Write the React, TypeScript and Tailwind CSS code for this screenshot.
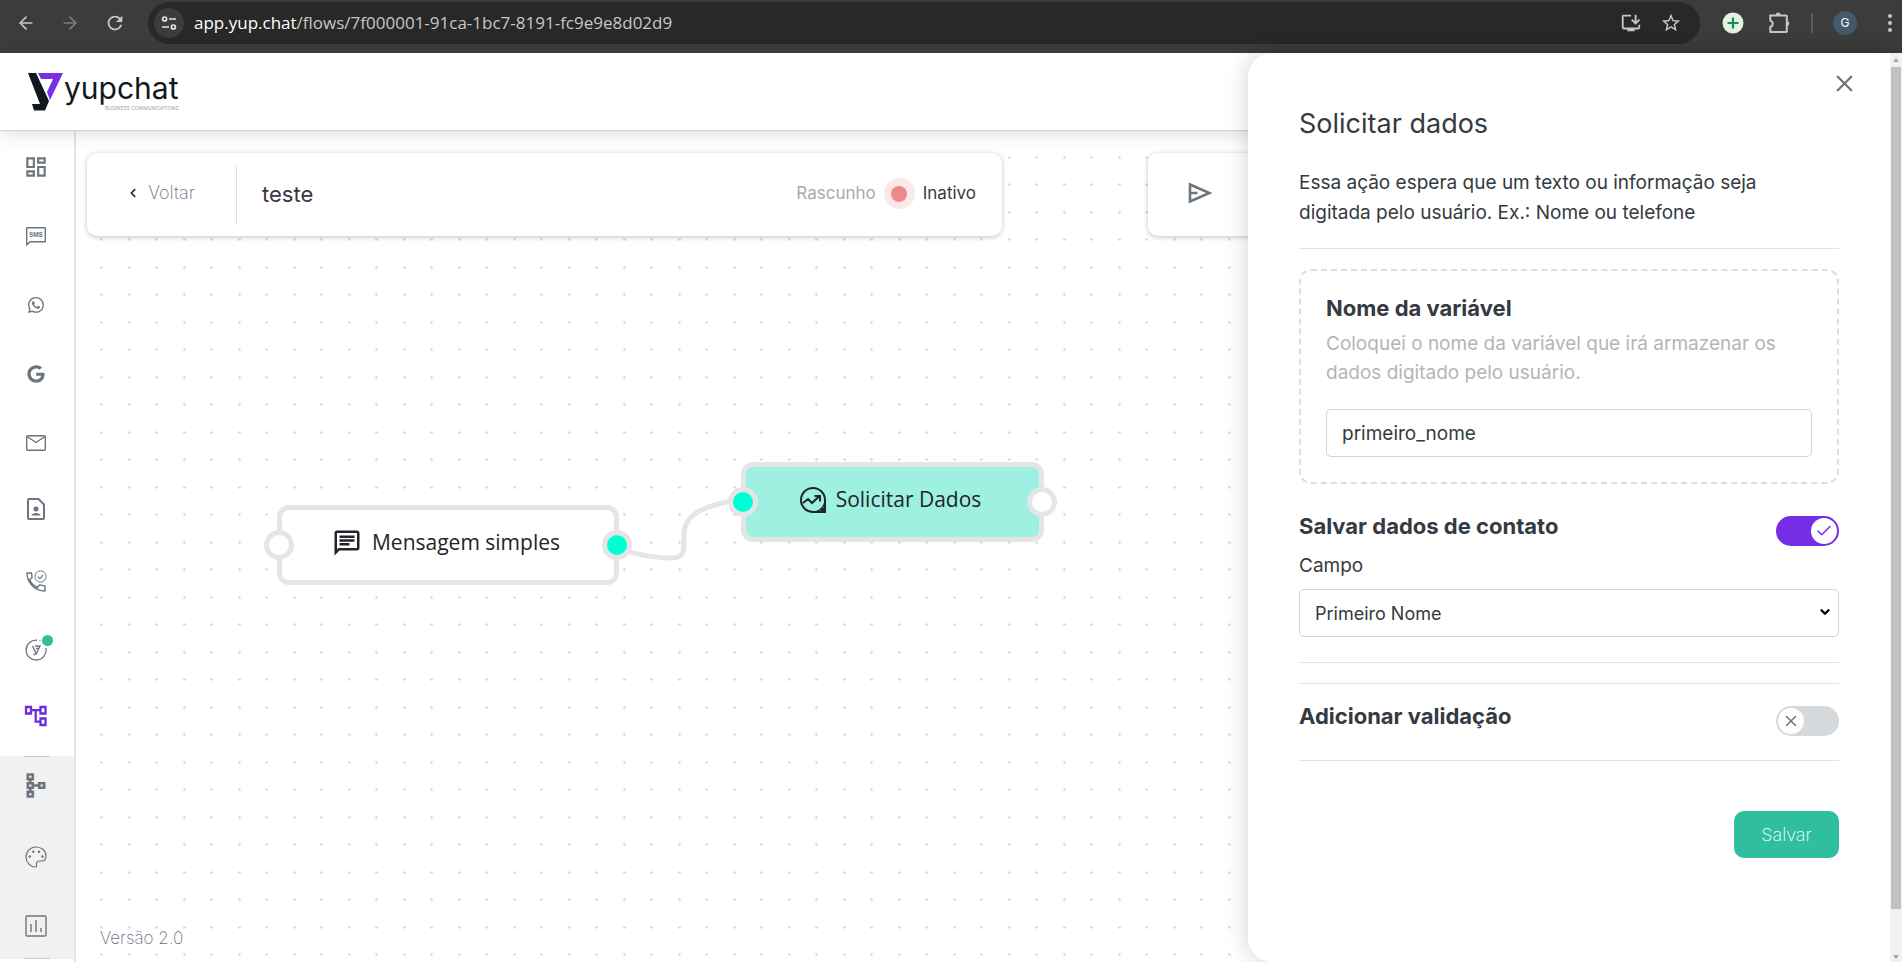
import React, { useState } from 'react';
import { ArrowLeft, ArrowRight, Check, ChevronDown, X } from 'lucide-react';
import {
  MdOutlineDashboard,
  MdOutlineChat,
  MdRefresh,
  MdStarBorder,
  MdInstallDesktop
} from 'react-icons/md';
import { FaGoogle, FaChevronLeft } from 'react-icons/fa';
import { BsWhatsapp } from 'react-icons/bs';

const PlusBadge = () => (
  <svg viewBox="0 0 22 22" className="w-[22px] h-[22px]">
    <circle cx="11" cy="11" r="10.5" fill="#e3f3e0" />
    <path d="M11 5.500v11M5.500 11h11" stroke="#0b8f5a" strokeWidth="2.200" />
  </svg>
);

const PuzzleIcon = () => (
  <svg viewBox="0 0 22 22" className="w-[22px] h-[22px]">
    <path
      d="M2 3.500h16a.8.8 0 0 1 .8.8v14.900a.8.8 0 0 1-.8.800H2.300v-5.200a3.200 3.200 0 0 0 0-6.200V3.500z"
      fill="none"
      stroke="currentColor"
      strokeWidth="2"
      strokeLinejoin="round"
    />
    <path d="M7.800 3a2.400 2.400 0 0 1 4.800 0zM19 9.200a2.400 2.400 0 0 1 0 4.800z" fill="currentColor" />
  </svg>
);

const SiteInfoIcon = () => (
  <svg viewBox="0 0 16 16" className="w-4 h-4" fill="none" stroke="#e3e3e3" strokeWidth="1.700">
    <circle cx="3.600" cy="4" r="2" />
    <path d="M8 4h7M1 12h7" />
    <circle cx="12.400" cy="12" r="2" />
  </svg>
);

const Logo = () => (
  <div className="flex items-start">
    <svg viewBox="0 0 36 38" className="w-9 h-[38px]">
      <path d="M0 0h8l13 28-4 9.500H6L4 31h8z" fill="#101820" />
      <path d="M10 0h25L22 27l-3-8 6-13H13z" fill="#7a2ee6" />
    </svg>
    <div className="flex flex-col items-end gap-0.5">
      <span className="text-[30px] leading-[30px] text-[#101820]">yupchat</span>
      <span className="whitespace-nowrap text-[5px] leading-[6px] text-gray-400">BUSINESS COMMUNICATIONS</span>
    </div>
  </div>
);

const SmsIcon = () => (
  <svg viewBox="0 0 22 22" className="w-[22px] h-[22px]">
    <path d="M1.700 20V2.700h18.600v14H5z" fill="none" stroke="currentColor" strokeWidth="1.400" strokeLinejoin="round" />
    <text x="11" y="12" textAnchor="middle" fontSize="6" fontWeight="700" fill="currentColor">SMS</text>
  </svg>
);

const MailIcon = () => (
  <svg viewBox="0 0 22 22" className="w-[22px] h-[22px]" fill="none" stroke="currentColor" strokeWidth="1.400">
    <rect x="1.700" y="3.700" width="18.600" height="14.600" rx="1" />
    <path d="M2 4.500l9 6 9-6" />
  </svg>
);

const ContactFileIcon = () => (
  <svg viewBox="0 0 18 22" className="mb-1.5 shrink-0 w-[18px] h-[22px]">
    <path d="M2 1h9.500L17 6.500V20a1 1 0 0 1-1 1H2a1 1 0 0 1-1-1V2a1 1 0 0 1 1-1z" fill="none" stroke="currentColor" strokeWidth="2" />
    <circle cx="9" cy="11" r="2.500" fill="currentColor" />
    <path d="M4.500 17.500c0-3.500 9-3.500 9 0z" fill="currentColor" />
  </svg>
);

const PhoneCheckIcon = () => (
  <svg viewBox="0 0 22 22" className="w-[22px] h-[22px]" fill="none" stroke="currentColor">
    <path strokeWidth="1.400" strokeLinejoin="round" d="M2 3h4.500l.6 4.500-2.500 2.300c1.700 3.500 4.200 6 7.700 7.700l2.200-2.600 5.500 1V21C10 21 2 13 2 3z" />
    <circle cx="15.500" cy="6.500" r="5.600" strokeWidth="1" />
    <path d="M12.800 6.700l2 1.900 3.500-3.800" strokeWidth="1.100" />
  </svg>
);

const YupCircleIcon = () => (
  <svg viewBox="0 0 22 22" className="w-[22px] h-[22px]" fill="none" stroke="currentColor">
    <path d="M12 1.100A10 10 0 1 0 20.900 9" strokeWidth="1.300" />
    <path d="M7.500 7l3.500 7-1 1.500H8.500M10 7h5l-4 8.500M11 9.500h2.500" strokeWidth="1.300" />
    <path d="M14.500 1.500h1" strokeWidth="1.300" />
  </svg>
);

const FlowIcon = () => (
  <svg viewBox="0 0 24 22" className="mb-1.5 shrink-0 w-6 h-[22px]" fill="none" stroke="currentColor" strokeWidth="2.300">
    <path d="M2 2h5v6.500H2zM16.500 2h5v6.500h-5zM16.500 13.500h5V20h-5zM7 5.200h9.500M11.700 5.200v11.500h4.800" />
  </svg>
);

const TreeIcon = () => (
  <svg viewBox="0 0 20 25" className="mb-1.5 shrink-0 w-5 h-[25px]" fill="none" stroke="currentColor" strokeWidth="2.600">
    <path d="M1.800 1.500h5v4.600h-5zM1.800 10.200h5v4.600h-5zM1.800 18.900h5v4.600h-5zM13.200 10.200h5v4.600h-5zM4.300 6.200v4M4.300 14.800v4M6.800 12.500h6.400" />
  </svg>
);

const PaletteIcon = () => (
  <svg viewBox="0 0 22 22" className="w-[22px] h-[22px]" fill="none" stroke="currentColor" strokeWidth="1.200">
    <path d="M11 1C5.500 1 1 5.500 1 11s4.500 10 9.500 10c1.500 0 1.300-1 1-2-.6-2.500.8-4 3.500-4h2c2.500 0 4-1.500 4-5 0-5.500-4.500-9-10-9z" />
    <g fill="currentColor" stroke="none">
      <circle cx="4.800" cy="10.500" r="1.200" />
      <circle cx="8.200" cy="5.700" r="1.200" />
      <circle cx="14" cy="5.700" r="1.200" />
      <circle cx="17.500" cy="10.500" r="1.200" />
    </g>
  </svg>
);

const ReportIcon = () => (
  <svg viewBox="0 0 22 22" className="w-[22px] h-[22px]" fill="none" stroke="currentColor" strokeWidth="1.400">
    <rect x="1" y="1" width="20" height="20" rx="1" />
    <path d="M6 9v8M11 5v12M16 13v4" />
  </svg>
);

const SendIcon = () => (
  <svg viewBox="0 0 24 22" className="w-6 h-[22px]" fill="none" stroke="#6c757d" strokeWidth="2.600">
    <path d="M2 2.500v17L21.500 11zM2 11h7.500" />
  </svg>
);

const CaptureIcon = () => (
  <svg viewBox="0 0 26 26" className="w-[26px] h-[26px]" fill="none" stroke="#212529" strokeWidth="2">
    <path d="M25 13A12 12 0 1 0 13 25h12z" />
    <path d="M25 13a12 12 0 0 1-12 12" strokeWidth="1.500" />
    <path d="M3 16l5-4 4 4 7.500-7M14.500 9H20v5.500" />
    <circle cx="22.500" cy="22.500" r="1" />
  </svg>
);

const mainMenu = [
  { label: 'Dashboard', icon: <MdOutlineDashboard className="shrink-0 w-[26px] h-[26px]" /> },
  { label: 'SMS', icon: <SmsIcon /> },
  { label: 'WhatsApp', icon: <BsWhatsapp className="w-4 h-4" /> },
  { label: 'Google', icon: <FaGoogle className="w-[18px] h-[18px]" /> },
  { label: 'E-mail', icon: <MailIcon /> },
  { label: 'Contatos', icon: <ContactFileIcon /> },
  { label: 'Chamadas', icon: <PhoneCheckIcon /> },
  { label: 'Yup', icon: <YupCircleIcon />, dot: true },
  { label: 'Fluxos', icon: <FlowIcon />, active: true }
];

const toolsMenu = [
  { label: 'Integrações', icon: <TreeIcon /> },
  { label: 'Aparência', icon: <PaletteIcon /> },
  { label: 'Relatórios', icon: <ReportIcon /> }
];

const MenuItem = ({ item }: any) => (
  <a
    href="#"
    aria-label={item.label}
    className={`relative w-6 h-6 flex items-center justify-center ${item.active ? 'text-[#6f2be2]' : 'text-[#6c757d]'}`}
  >
    {item.icon}
    {item.dot && <span className="absolute -top-[3px] -right-[5px] w-[11px] h-[11px] rounded-full bg-[#2fbfa0]" />}
  </a>
);

const Port = ({ side, filled }: { side: 'left' | 'right'; filled?: boolean }) => (
  <span
    className={`absolute top-5 w-[30px] h-[30px] rounded-full border-[5px] border-[#e5e5e5] ${
      side === 'left' ? '-left-[18px]' : '-right-[18px]'
    } ${filled ? 'bg-[#00ffd5]' : 'bg-white'}`}
  />
);

const Switch = ({ id, checked, onChange }: { id: string; checked: boolean; onChange: (value: boolean) => void }) => (
  <span className={`relative block shrink-0 w-[63px] h-[30px] rounded-full ${checked ? 'bg-[#762de6]' : 'bg-[#d5d9dc]'}`}>
    <input
      id={id}
      type="checkbox"
      role="switch"
      checked={checked}
      onChange={(e) => onChange(e.target.checked)}
      className="absolute inset-0 w-full h-full opacity-0 cursor-pointer"
    />
    <span
      className={`absolute top-0.5 w-[26px] h-[26px] rounded-full bg-white flex items-center justify-center pointer-events-none ${
        checked ? 'right-0.5' : 'left-0.5'
      }`}
    >
      {checked ? <Check className="w-[18px] h-[18px] text-[#762de6]" strokeWidth={2} /> : <X className="w-[18px] h-[18px] text-gray-500" strokeWidth={2} />}
    </span>
  </span>
);

export default function App() {
  const [variable, setVariable] = useState('primeiro_nome');
  const [saveContact, setSaveContact] = useState(true);
  const [validate, setValidate] = useState(false);

  return (
    <div className="h-screen flex flex-col overflow-hidden bg-white font-['Inter',sans-serif] text-[#343a40]">
      {/* Browser bar */}
      <div className="h-[53px] shrink-0 flex items-start pt-0.5 bg-[#3c3c3c] text-[#c7c7c7]">
        <div className="h-[42px] w-[148px] shrink-0 flex items-center gap-6 pl-4">
          <ArrowLeft className="w-5 h-5" />
          <ArrowRight className="w-5 h-5 text-[#7d7d7d]" />
          <MdRefresh className="w-[22px] h-[22px]" />
        </div>
        <div className="flex-1 h-[42px] flex items-center rounded-full bg-[#282828] pl-1.5 pr-[18px]">
          <span className="w-[30px] h-[30px] rounded-full bg-[#3c3c3c] flex items-center justify-center">
            <SiteInfoIcon />
          </span>
          <span className="flex-1 pl-2.5 text-[17px] font-['Open_Sans',sans-serif]">
            <span className="text-white">app.yup.chat</span>/flows/7f000001-91ca-1bc7-8191-fc9e9e8d02d9
          </span>
          <MdInstallDesktop className="w-[22px] h-[22px]" />
          <MdStarBorder className="ml-[18px] w-[22px] h-[22px]" />
        </div>
        <div className="h-[42px] flex items-center pl-[22px]">
          <PlusBadge />
          <span className="ml-6">
            <PuzzleIcon />
          </span>
          <span className="ml-[21px] w-0.5 h-5 bg-[#5c5c5c]" />
          <span className="ml-5 w-6 h-6 rounded-full bg-[#455a68] text-white text-[12px] flex items-center justify-center">G</span>
          <svg viewBox="0 0 4 18" className="ml-[31px] mr-2.5 w-1 h-[18px]" fill="currentColor">
            <circle cx="2" cy="2" r="2" />
            <circle cx="2" cy="9" r="2" />
            <circle cx="2" cy="16" r="2" />
          </svg>
        </div>
      </div>

      <div className="relative flex-1 min-h-0 flex flex-col">
        {/* Header */}
        <header className="relative z-10 h-[78px] shrink-0 flex items-start pt-5 pl-7 bg-white border-b border-[#ced4da] shadow-[0_4px_16px_rgba(0,0,0,0.12)]">
          <Logo />
        </header>

        <div className="flex-1 min-h-0 flex">
          {/* Sidebar */}
          <nav className="w-[76px] shrink-0 border-r-2 border-[#e5e5e5]">
            <div className="flex flex-col items-center gap-[45px] pt-6 pb-[25px] pr-0.5">
              {mainMenu.map((item) => (
                <MenuItem key={item.label} item={item} />
              ))}
            </div>
            <div className="flex flex-col items-center bg-[#f1f1f1]">
              <hr className="w-[26px] border-[#c8c8c8]" />
              <div className="flex flex-col items-center gap-[45px] pt-[19px] pb-5 pr-0.5">
                {toolsMenu.map((item) => (
                  <MenuItem key={item.label} item={item} />
                ))}
              </div>
              <hr className="w-[26px] border-[#c8c8c8]" />
            </div>
          </nav>

          {/* Flow canvas */}
          <main className="relative flex-1 overflow-hidden">
            <svg className="absolute inset-0 w-full h-full">
              <defs>
                <pattern id="dots" width="55" height="55" patternUnits="userSpaceOnUse">
                  <g fill="#d6d6d6">
                    <circle cx="25.500" cy="26.500" r="1.300" />
                    <circle cx="53.500" cy="26.500" r="1.300" />
                    <circle cx="25.500" cy="53.500" r="1.300" />
                    <circle cx="53.500" cy="53.500" r="1.300" />
                  </g>
                </pattern>
              </defs>
              <rect width="100%" height="100%" fill="url(#dots)" />
              <path
                d="M541 417C560 424 582 427 594 427S608 424 608 410C606 388 616 376 667 368"
                fill="none"
                stroke="#e5e5e5"
                strokeWidth="5"
              />
            </svg>

            <div className="relative flex gap-[146px] pt-[22px] pl-[11px] pr-[22px]">
              <div className="flex-5 h-[83px] flex items-center rounded-[10px] bg-white shadow-[0_1px_5px_rgba(0,0,0,0.25)]">
                <button className="w-[150px] h-[57px] flex items-center justify-center gap-2.5 border-r border-[#dedede] pb-1 text-[18px] font-extralight text-gray-500">
                  <FaChevronLeft className="w-2.5 h-2.5 text-[#212529]" />
                  Voltar
                </button>
                <h1 className="flex-1 pl-[25px] text-[22px] text-[#3b3444]">teste</h1>
                <div className="flex items-center pb-0.5 mr-[26px] text-[17px]">
                  <span className="text-[#a9a9a9]">Rascunho</span>
                  <span className="mx-2 w-[31px] h-[31px] rounded-full bg-[#fce8e8] flex items-center justify-center">
                    <span className="w-4 h-4 rounded-full bg-[#eb8a8a]" />
                  </span>
                  <span>Inativo</span>
                </div>
              </div>
              <div className="flex-4 h-[83px] flex items-center rounded-[10px] bg-white shadow-[0_1px_5px_rgba(0,0,0,0.25)]">
                <button aria-label="Testar" className="ml-10 pb-1">
                  <SendIcon />
                </button>
              </div>
            </div>

            {/* Nodes */}
            <div className="absolute left-[201px] top-[374px] w-[342px] h-20 rounded-xl border-[5px] border-[#e5e5e5] bg-white">
              <div className="h-full flex items-center justify-center gap-2.5 pr-1 pb-1 text-[21px] text-[#212529] font-['Open_Sans',sans-serif]">
                <MdOutlineChat className="w-[30px] h-[30px]" />
                Mensagem simples
              </div>
              <Port side="left" />
              <Port side="right" filled />
            </div>
            <div className="absolute left-[665px] top-[331px] w-[303px] h-20 rounded-xl border-[5px] border-[#e5e5e5] bg-[#9ef0e1]">
              <div className="h-full flex items-center justify-center gap-2.5 pr-1 pb-1 text-[21px] text-[#212529] font-['Open_Sans',sans-serif]">
                <CaptureIcon />
                Solicitar Dados
              </div>
              <Port side="left" filled />
              <Port side="right" />
            </div>

            <p className="absolute left-6 bottom-3 text-[17px] leading-6 font-extralight text-gray-500">Versão 2.0</p>
          </main>
        </div>

        {/* Action panel */}
        <aside className="absolute z-20 top-0 right-3 bottom-0 w-[642px] rounded-l-[24px] bg-white shadow-[0_0_24px_rgba(0,0,0,0.18)] pl-[51px] pr-[51px]">
          <button aria-label="Fechar" className="absolute top-[17px] right-8 text-[#6c757d]">
            <X className="w-[27px] h-[27px]" strokeWidth={2} />
          </button>
          <h2 className="pt-[53px] text-[27px] leading-9">Solicitar dados</h2>
          <p className="pt-[26px] text-[19px] leading-[30px]">
            Essa ação espera que um texto ou informação seja
            <br />
            digitada pelo usuário. Ex.: Nome ou telefone
          </p>
          <hr className="mt-5 border-[#e2e3e5]" />

          <section className="mt-5 h-[215px] rounded-xl border-2 border-dashed border-[#dedede] px-[25px] pt-[22px]">
            <label htmlFor="variable" className="block text-[22px] leading-[30px] font-bold">Nome da variável</label>
            <p className="pt-[6px] text-[19px] leading-[29px] text-[#b5b5b5]">
              Coloquei o nome da variável que irá armazenar os dados digitado pelo usuário.
            </p>
            <input
              id="variable"
              value={variable}
              onChange={(e) => setVariable(e.target.value)}
              className="mt-[22px] w-full h-12 rounded-[5px] border border-[#ced4da] px-[15px] text-[19px]"
            />
          </section>

          <div className="mt-[27px] flex justify-between">
            <label htmlFor="save-contact" className="text-[22px] leading-[30px] font-bold">Salvar dados de contato</label>
            <div className="pt-[5px]">
              <Switch id="save-contact" checked={saveContact} onChange={setSaveContact} />
            </div>
          </div>
          <label htmlFor="field" className="mt-[5px] block text-[19px] leading-[30px]">Campo</label>
          <div className="relative mt-2">
            <select id="field" className="appearance-none w-full h-12 rounded-[5px] border border-[#ced4da] bg-white px-[15px] text-[18px]">
              <option>Primeiro Nome</option>
              <option>Sobrenome</option>
              <option>Telefone</option>
            </select>
            <ChevronDown className="absolute right-[7px] top-4 w-3.5 h-3.5 text-black pointer-events-none" strokeWidth={4} />
          </div>
          <hr className="mt-[25px] border-[#e2e3e5]" />
          <hr className="mt-5 border-[#e2e3e5]" />
          <div className="mt-[17px] flex justify-between">
            <label htmlFor="validate" className="text-[22px] leading-[30px] font-bold">Adicionar validação</label>
            <div className="pt-[5px]">
              <Switch id="validate" checked={validate} onChange={setValidate} />
            </div>
          </div>
          <hr className="mt-6 border-[#e2e3e5]" />
          <div className="mt-[50px] flex justify-end">
            <button className="w-[105px] h-[47px] rounded-[10px] bg-[#2fbfa0] text-[18px] font-extralight text-white">Salvar</button>
          </div>
        </aside>

        {/* Scrollbar */}
        <div className="absolute z-20 top-0 right-0 bottom-0 w-3 bg-[#f1f1f1] flex flex-col items-center">
          <svg viewBox="0 0 6 4" className="mt-[5px] w-1.5 h-1 shrink-0" fill="#a3a3a3">
            <path d="M0 4l3-4 3 4z" />
          </svg>
          <div className="mt-[5px] w-2.5 flex-1 bg-[#c1c1c1]" />
          <svg viewBox="0 0 6 4" className="mt-[46px] mb-[3px] w-1.5 h-1 shrink-0" fill="#a3a3a3">
            <path d="M0 0l3 4 3-4z" />
          </svg>
        </div>
      </div>
    </div>
  );
}
